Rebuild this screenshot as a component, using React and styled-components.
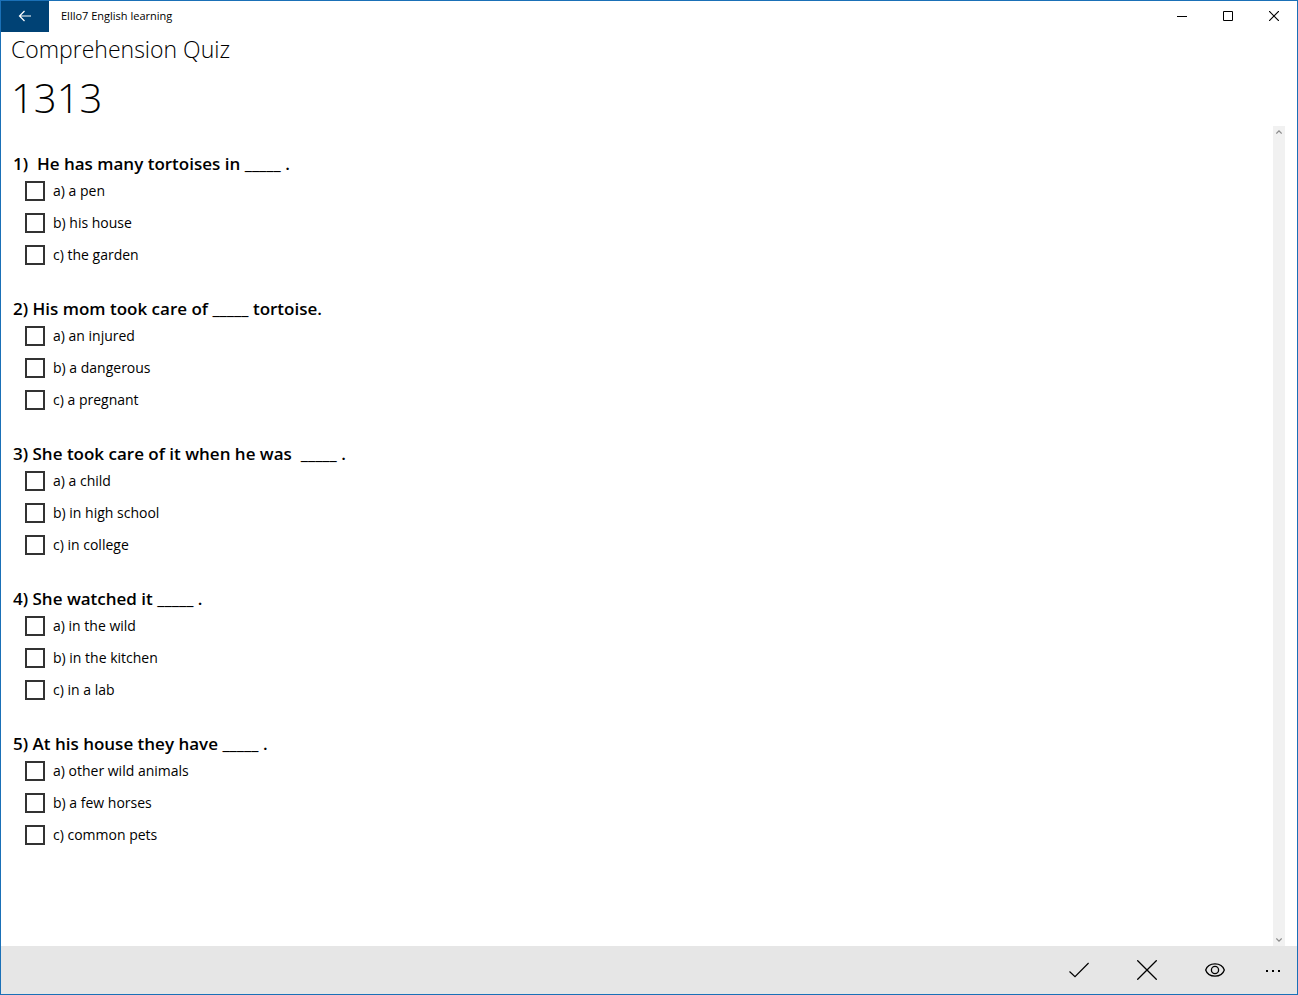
import styled, { createGlobalStyle } from "styled-components";

const GlobalStyle = createGlobalStyle`
  *, *::before, *::after {
    box-sizing: border-box;
  }

  body {
    margin: 0;
    background: #ffffff;
    color: #000000;
    font-family: "Open Sans", "Noto Sans", sans-serif;
  }

  button {
    padding: 0;
    border: none;
    background: none;
    color: inherit;
    font: inherit;
    cursor: pointer;
  }
`;

const Window = styled.div`
  height: 100vh;
  display: flex;
  flex-direction: column;
  border: 1px solid #1a70b7;
`;

const TitleBar = styled.header`
  display: flex;
  flex-shrink: 0;
  height: 31px;
`;

const BackButton = styled.button`
  display: flex;
  align-items: center;
  justify-content: center;
  width: 48px;
  padding-bottom: 1px;
  color: #ffffff;
  background-color: #004275;
`;

const AppName = styled.span`
  flex: 1;
  padding-left: 12px;
  font-size: 11px;
  line-height: 30px;
`;

const CaptionButton = styled.button`
  display: flex;
  align-items: center;
  justify-content: center;
  width: 46px;
  height: 30px;

  &:hover {
    background-color: #e5e5e5;
  }
`;

const Heading = styled.div`
  flex-shrink: 0;
  padding-left: 10px;
`;

const Subject = styled.h2`
  margin: 0 0 4px;
  font-size: 23px;
  font-weight: 300;
  line-height: 34px;
`;

const QuizNumber = styled.h1`
  margin: 0;
  font-size: 40px;
  font-weight: 300;
  line-height: 56px;
`;

const Content = styled.main`
  display: flex;
  flex: 1;
  min-height: 0;
  padding-right: 12px;
`;

const Questions = styled.form`
  display: flex;
  flex: 1;
  flex-direction: column;
  gap: 27px;
  padding: 27px 12px 0;
  overflow: hidden;
`;

const Question = styled.fieldset`
  min-width: 0;
  margin: 0;
  padding: 0;
  border: none;
`;

const QuestionText = styled.legend`
  padding: 0;
  font-size: 17px;
  font-weight: 600;
  line-height: 22px;
  white-space: pre-wrap;
`;

const Option = styled.label`
  display: flex;
  align-items: center;
  gap: 8px;
  height: 32px;
  padding-left: 12px;
  font-size: 14px;
  line-height: 20px;
`;

const CheckBox = styled.input`
  appearance: none;
  flex-shrink: 0;
  width: 20px;
  height: 20px;
  margin: 0;
  border: 2px solid #333333;
  background-color: #ffffff;

  &:checked {
    background-color: #1a70b7;
  }
`;

const ScrollBar = styled.div`
  display: flex;
  flex-direction: column;
  justify-content: space-between;
  width: 12px;
  background-color: #f1f1f1;
`;

const ScrollButton = styled.button`
  display: flex;
  align-items: center;
  justify-content: center;
  width: 12px;
  height: 12px;
  color: #8c8c8c;
`;

const CommandBar = styled.footer`
  display: flex;
  flex-shrink: 0;
  justify-content: flex-end;
  height: 48px;
  background-color: #e6e6e6;
`;

const CommandButton = styled.button`
  display: flex;
  align-items: center;
  justify-content: center;
  width: ${(props) => (props.$narrow ? "48px" : "68px")};

  &:hover {
    background-color: #d6d6d6;
  }
`;

const Icon = styled.svg`
  display: block;
  fill: none;
  stroke: currentColor;
`;

const questions = [
  {
    text: "1)  He has many tortoises in _____ .",
    options: ["a) a pen", "b) his house", "c) the garden"],
  },
  {
    text: "2) His mom took care of _____ tortoise.",
    options: ["a) an injured", "b) a dangerous", "c) a pregnant"],
  },
  {
    text: "3) She took care of it when he was  _____ .",
    options: ["a) a child", "b) in high school", "c) in college"],
  },
  {
    text: "4) She watched it _____ .",
    options: ["a) in the wild", "b) in the kitchen", "c) in a lab"],
  },
  {
    text: "5) At his house they have _____ .",
    options: ["a) other wild animals", "b) a few horses", "c) common pets"],
  },
];

const QuizQuestion = ({ text, options }) => (
  <Question>
    <QuestionText>{text}</QuestionText>
    {options.map((option) => (
      <Option key={option}>
        <CheckBox type="checkbox" />
        {option}
      </Option>
    ))}
  </Question>
);

const App = () => {
  return (
    <>
      <GlobalStyle />
      <Window>
        <TitleBar>
          <BackButton aria-label="Back">
            <Icon width="14" height="12" viewBox="0 0 14 12" strokeWidth="1.2">
              <path d="M13 6H1.5M6.5 1L1.5 6L6.5 11" />
            </Icon>
          </BackButton>
          <AppName>Elllo7 English learning</AppName>
          <CaptionButton aria-label="Minimize">
            <Icon width="10" height="10" viewBox="0 0 10 10">
              <path d="M0 5.5H10" />
            </Icon>
          </CaptionButton>
          <CaptionButton aria-label="Maximize">
            <Icon width="10" height="10" viewBox="0 0 10 10">
              <path d="M0.5 0.5H9.5V9.5H0.5Z" />
            </Icon>
          </CaptionButton>
          <CaptionButton aria-label="Close">
            <Icon width="10" height="10" viewBox="0 0 10 10" strokeWidth="1.2">
              <path d="M0 0L10 10M10 0L0 10" />
            </Icon>
          </CaptionButton>
        </TitleBar>
        <Heading>
          <Subject>Comprehension Quiz</Subject>
          <QuizNumber>1313</QuizNumber>
        </Heading>
        <Content>
          <Questions>
            {questions.map((question) => (
              <QuizQuestion key={question.text} {...question} />
            ))}
          </Questions>
          <ScrollBar>
            <ScrollButton aria-label="Scroll up">
              <Icon width="6" height="4" viewBox="0 0 6 4" strokeWidth="1.3">
                <path d="M0.3 3.5L3 0.9L5.7 3.5" />
              </Icon>
            </ScrollButton>
            <ScrollButton aria-label="Scroll down">
              <Icon width="6" height="4" viewBox="0 0 6 4" strokeWidth="1.3">
                <path d="M0.3 0.5L3 3.1L5.7 0.5" />
              </Icon>
            </ScrollButton>
          </ScrollBar>
        </Content>
        <CommandBar>
          <CommandButton aria-label="Check answers">
            <Icon width="20" height="20" viewBox="0 0 20 20" strokeWidth="1.2">
              <path d="M0.5 11.5L6 16.7L19.6 3" />
            </Icon>
          </CommandButton>
          <CommandButton aria-label="Clear answers">
            <Icon width="20" height="20" viewBox="0 0 20 20" strokeWidth="1.3">
              <path d="M0.3 0.3L19.7 19.7M19.7 0.3L0.3 19.7" />
            </Icon>
          </CommandButton>
          <CommandButton aria-label="Show answers">
            <Icon width="20" height="20" viewBox="0 0 20 20" strokeWidth="1.3">
              <path d="M0.7 10C2 6 5.6 3.9 10 3.9S18 6 19.3 10C18 14 14.4 16.1 10 16.1S2 14 0.7 10Z" />
              <circle cx="10" cy="10" r="3.6" />
            </Icon>
          </CommandButton>
          <CommandButton aria-label="More" $narrow>
            <Icon width="14" height="4" viewBox="0 0 14 4" strokeWidth="2">
              <path d="M0 3H2M6 3H8M12 3H14" />
            </Icon>
          </CommandButton>
        </CommandBar>
      </Window>
    </>
  );
};

export default App;
